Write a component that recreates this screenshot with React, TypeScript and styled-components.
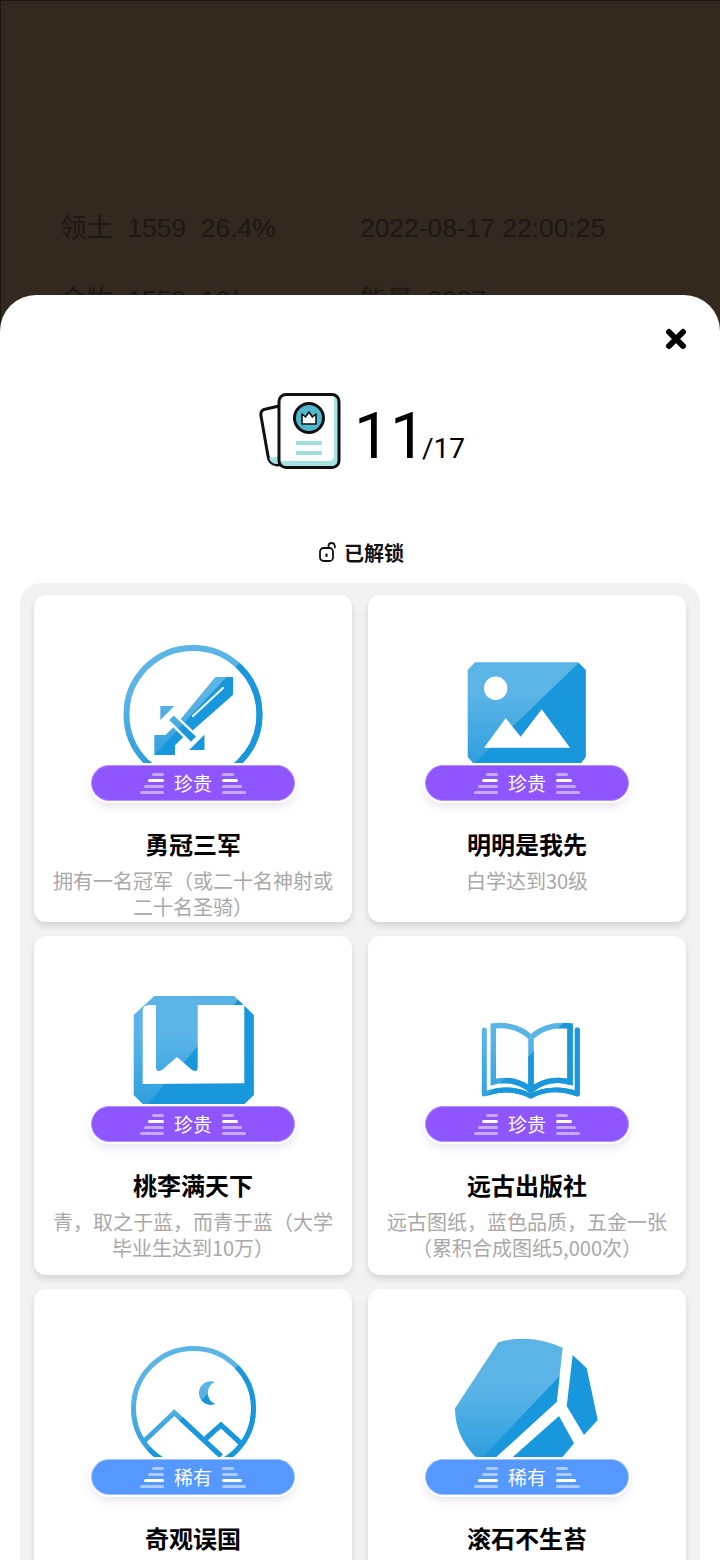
import React from 'react';
import styled, { createGlobalStyle } from 'styled-components';

const LIGHT = '#5ab4e6';
const FADE = '#2f9fde';
const DARK = '#1897dc';

type Line = [number, number, number, number];

// two-tone fill used by all the medals: soft fade with a hard diagonal split on top
function Medal({
  id,
  split,
  render,
  over,
}: {
  id: string;
  split: Line;
  render: (paint: string) => React.ReactNode;
  over?: React.ReactNode;
}) {
  const [x1, y1, x2, y2] = split;
  const dx = x2 - x1;
  const dy = y2 - y1;
  return (
    <MedalSvg viewBox="0 -10 160 128">
      <defs>
        <linearGradient id={`${id}-fade`} gradientUnits="userSpaceOnUse" x1="0" y1="50" x2="0" y2="118">
          <stop offset="0" stopColor={LIGHT} />
          <stop offset="1" stopColor={FADE} />
        </linearGradient>
        <clipPath id={`${id}-clip`}>
          <polygon
            points={`${x1 - dx},${y1 - dy} ${x2 + dx},${y2 + dy} ${x2 + dx + 400},${y2 + dy + 400} ${x1 - dx + 400},${y1 - dy + 400}`}
          />
        </clipPath>
      </defs>
      {render(`url(#${id}-fade)`)}
      <g clipPath={`url(#${id}-clip)`}>{render(DARK)}</g>
      {over}
    </MedalSvg>
  );
}

const SwordMedal = () => (
  <Medal
    id="sword"
    split={[124.7, 20, 41.3, 110]}
    render={(p) => (
      <>
        <circle cx="80" cy="69.5" r="66.5" fill="none" stroke={p} strokeWidth="6" />
        <path fill={p} d="M102.3 32H120V49.7L78 86.7 67 75Z" />
        <polygon fill={p} points="41.3,90 52.3,90 64.7,78.3 73,89 62,100 62,110 41.3,110" />
        <polygon fill={p} points="47.3,61 61.3,61 47.3,75" />
        <polygon fill={p} points="91.3,90 91.3,105 76.3,105" />
        <polygon fill={p} points="60.7,69 84.7,91.7 78,98.3 54.7,75" />
      </>
    )}
    over={
      <>
        <path d="M110 43L80 71" stroke="#fff" strokeWidth="2" strokeLinecap="round" fill="none" />
        <polygon points="60.7,69 84.7,91.7 78,98.3 54.7,75" stroke="#fff" strokeWidth="2.4" fill="none" />
      </>
    }
  />
);

const PictureMedal = () => (
  <Medal
    id="picture"
    split={[131.3, 18.3, 28, 117.7]}
    render={(p) => (
      <polygon fill={p} points="28,17.3 131,17.3 138.7,25 138.7,112 134,118 26,118 20.7,112 20.7,25" />
    )}
    over={
      <>
        <circle cx="48.7" cy="43.3" r="11.7" fill="#fff" />
        <polygon fill="#fff" points="37,102.7 58.7,73.3 73.7,91.7 94.7,64.3 123,102.7" />
      </>
    }
  />
);

const BookmarkMedal = () => (
  <Medal
    id="bookmark"
    split={[124.7, 14, 34.7, 118]}
    render={(p) => (
      <polygon fill={p} points="41.3,10 121.3,10 140.7,29 140.7,109 131.3,118 29.7,118 20.7,109 20.7,29" />
    )}
    over={
      <path
        fill="#fff"
        d="M29.7 25Q29.7 19 36 19H43V81Q43 87 49 84L64 71 79 84Q84.7 87 84.7 81V19H131.3V97.3L29.7 98Z"
      />
    }
  />
);

const OpenBookMedal = () => (
  <Medal
    id="openbook"
    split={[119.7, 34, 46.3, 104]}
    render={(p) => (
      <g fill="none" stroke={p}>
        <path
          strokeWidth="5.5"
          d="M46.3 40C62 38 76 43 84 52C92 43 106 38 123 40V96C108 92 94 96 84 104C74 96 60 92 46.3 96ZM84 52V104"
        />
        <path
          strokeWidth="5"
          strokeLinecap="round"
          strokeLinejoin="round"
          d="M37.3 44V108C54 102 70 103 83.7 110C97 103 114 102 130.3 108V44"
        />
      </g>
    )}
  />
);

const MoonMedal = () => (
  <Medal
    id="moon"
    split={[124.7, 27, 31.3, 114.3]}
    render={(p) => (
      <>
        <circle cx="80.5" cy="69.5" r="60" fill="none" stroke={p} strokeWidth="5" />
        <path d="M31.3 102L61.3 73.7 108 117M93 99.3L108 86 128 104.3" fill="none" stroke={p} strokeWidth="5" />
        <path d="M102 43A11.8 11.8 0 1 0 102 65A12 12 0 0 1 102 43Z" fill={p} />
      </>
    )}
  />
);

const RockMedal = () => (
  <Medal
    id="rock"
    split={[112, 37.7, 36.3, 117.7]}
    render={(p) => <path fill={p} d="M51.3 3.3Q83-6 115.7 8.7L109.7 62.7 48 119H29.7Q8 98 8 69.3Z" />}
    over={
      <>
        <polygon fill={DARK} points="125.7,16 139.7,29.3 150.7,81 137,96 119.7,67" />
        <polygon fill={DARK} points="112,77 127,104.3 114.7,119 64.7,119" />
      </>
    }
  />
);

const CounterIcon = () => (
  <svg width="82" height="78" viewBox="0 0 82 78">
    <path d="M20 14L7 17Q1 18 2 24L9 64Q10 72 18 73L26 72Z" fill="#fff" stroke="#111" strokeWidth="3" strokeLinejoin="round" />
    <path d="M10 66Q12 72 18 72L24 71V64Z" fill="#a9e2e3" />
    <rect x="20" y="2.5" width="60" height="73" rx="7" fill="#fff" />
    <path d="M75 3V64Q75 69 69 69H21V70Q21 75 27 75H74Q80 75 80 69V9Q80 3 75 3Z" fill="#a9e2e3" />
    <rect x="20" y="2.5" width="60" height="73" rx="7" fill="none" stroke="#111" strokeWidth="3" />
    <circle cx="50" cy="26" r="14.5" fill="#4fb8cf" stroke="#111" strokeWidth="3" />
    <path d="M43 32V22L46.5 25 50 20 53.5 25 57 22V32Z" fill="#fff" stroke="#111" strokeWidth="1.6" strokeLinejoin="round" />
    <rect x="37" y="49" width="26" height="4" fill="#9fe0df" />
    <rect x="37" y="59" width="26" height="4" fill="#9fe0df" />
  </svg>
);

const UnlockIcon = () => (
  <svg width="17" height="20" viewBox="0 0 17 20" fill="none" stroke="#111" strokeWidth="1.8">
    <rect x="1" y="6" width="13" height="13" rx="3.5" />
    <path d="M9.5 6V4Q9.5 1 12.5 1T15.8 4V5.5" strokeLinecap="round" />
    <circle cx="7.5" cy="12.5" r="1.1" fill="#111" stroke="none" />
    <path d="M7.5 12.5V15" />
  </svg>
);

const CloseIcon = () => (
  <svg width="22" height="22" viewBox="0 0 22 22" stroke="#000" strokeWidth="6" strokeLinecap="round">
    <path d="M4 4L18 18M18 4L4 18" />
  </svg>
);

const STRIPES = [12, 16, 20, 24];

function Stripes({ side, lit }: { side: 'left' | 'right'; lit: number }) {
  return (
    <StripeStack $side={side}>
      {STRIPES.map((w, i) => (
        <Stripe key={w} $lit={i === lit} style={{ width: w }} />
      ))}
    </StripeStack>
  );
}

const ACHIEVEMENTS = [
  { art: <SwordMedal />, rank: 'epic', title: '勇冠三军', desc: '拥有一名冠军（或二十名神射或二十名圣骑）' },
  { art: <PictureMedal />, rank: 'epic', title: '明明是我先', desc: '白学达到30级' },
  { art: <BookmarkMedal />, rank: 'epic', title: '桃李满天下', desc: '青，取之于蓝，而青于蓝（大学毕业生达到10万）' },
  { art: <OpenBookMedal />, rank: 'epic', title: '远古出版社', desc: '远古图纸，蓝色品质，五金一张（累积合成图纸5,000次）' },
  { art: <MoonMedal />, rank: 'rare', title: '奇观误国', desc: '' },
  { art: <RockMedal />, rank: 'rare', title: '滚石不生苔', desc: '' },
] as const;

export default function App() {
  return (
    <Page>
      <GlobalStyle />
      <StatRow>
        <StatLeft>领土&nbsp;&nbsp;1559&nbsp;&nbsp;26.4%</StatLeft>
        <span>2022-08-17 22:00:25</span>
      </StatRow>
      <StatRow>
        <StatLeft>金牧&nbsp;&nbsp;1559&nbsp;&nbsp;10/</StatLeft>
        <span>能量&nbsp;&nbsp;2007</span>
      </StatRow>
      <Sheet>
        <CloseRow>
          <CloseIcon />
        </CloseRow>
        <Counter>
          <CounterIcon />
          <Count>
            <CountMain>11</CountMain>
            <CountTotal>/17</CountTotal>
          </Count>
        </Counter>
        <SectionLabel>
          <UnlockIcon />
          已解锁
        </SectionLabel>
        <Panel>
          {ACHIEVEMENTS.map((a) => (
            <Card key={a.title}>
              {a.art}
              <Badge $rank={a.rank}>
                <Stripes side="left" lit={a.rank === 'epic' ? 1 : 2} />
                <BadgeText>{a.rank === 'epic' ? '珍贵' : '稀有'}</BadgeText>
                <Stripes side="right" lit={a.rank === 'epic' ? 1 : 2} />
              </Badge>
              <CardTitle>{a.title}</CardTitle>
              {a.desc && <CardDesc>{a.desc}</CardDesc>}
            </Card>
          ))}
        </Panel>
      </Sheet>
    </Page>
  );
}

const GlobalStyle = createGlobalStyle`
  html, body {
    margin: 0;
    padding: 0;
    background: #33291f;
  }
  * {
    box-sizing: border-box;
  }
`;

const Page = styled.div`
  position: relative;
  width: 720px;
  height: 1560px;
  overflow: hidden;
  padding-top: 208px;
  background: #33291f;
  box-shadow: inset 1px 1px 0 #1c1712;
  font-family: "Liberation Sans", "Noto Sans CJK SC", sans-serif;
`;

const StatRow = styled.div`
  display: flex;
  height: 72px;
  padding-left: 60px;
  align-items: flex-start;
  font-size: 26.4px;
  line-height: 40px;
  color: #1c1814;
`;

const StatLeft = styled.span`
  width: 300px;
`;

const Sheet = styled.div`
  position: absolute;
  left: 0;
  top: 295px;
  width: 720px;
  height: 1265px;
  padding: 33px 20px 0;
  overflow: hidden;
  background: #fff;
  border-radius: 36px 36px 0 0;
`;

const CloseRow = styled.div`
  display: flex;
  justify-content: flex-end;
  padding-right: 13px;
  height: 22px;
`;

const Counter = styled.div`
  display: flex;
  justify-content: center;
  align-items: center;
  gap: 13px;
  height: 78px;
  margin-top: 42px;
  padding-left: 4px;
  color: #000;
`;

const Count = styled.div`
  display: flex;
  align-items: baseline;
  padding-top: 11px;
`;

const CountMain = styled.span`
  font-family: Roboto, sans-serif;
  font-size: 64px;
  line-height: 78px;
`;

const CountTotal = styled.span`
  margin-left: -4px;
  font-family: Roboto, sans-serif;
  font-size: 28px;
`;

const SectionLabel = styled.div`
  display: flex;
  justify-content: center;
  align-items: center;
  gap: 8px;
  height: 30px;
  margin-top: 67px;
  padding-left: 3px;
  font-family: "Noto Sans CJK SC", sans-serif;
  font-size: 20px;
  font-weight: 700;
  color: #111;
`;

const Panel = styled.div`
  display: grid;
  grid-template-columns: 318px 318px;
  grid-template-rows: 327px 339px 340px;
  gap: 14px 16px;
  margin-top: 16px;
  padding: 12px 14px;
  background: #f2f2f2;
  border-radius: 20px;
`;

const Card = styled.div`
  display: flex;
  flex-direction: column;
  align-items: center;
  padding: 40px 19px 0;
  background: #fff;
  border-radius: 12px;
  box-shadow: 0 4px 6px rgba(0, 0, 0, 0.12);
`;

const MedalSvg = styled.svg`
  display: block;
  flex: none;
  width: 160px;
  height: 128px;
`;

const Badge = styled.div<{ $rank: 'epic' | 'rare' }>`
  display: flex;
  flex: none;
  align-items: center;
  justify-content: center;
  gap: 10px;
  width: 204px;
  height: 36px;
  margin-top: 2px;
  border: 1px solid ${(p) => (p.$rank === 'epic' ? '#b592ff' : '#9fc3ff')};
  border-radius: 18px;
  background: ${(p) => (p.$rank === 'epic' ? '#8f55ff' : '#5598ff')};
  box-shadow: 0 0 0 2px #fff, 0 5px 10px rgba(60, 40, 140, 0.14);
`;

const BadgeText = styled.span`
  font-family: "Noto Sans CJK SC", sans-serif;
  font-size: 19px;
  line-height: 24px;
  color: #fff;
`;

const StripeStack = styled.div<{ $side: 'left' | 'right' }>`
  display: flex;
  flex-direction: column;
  gap: 3px;
  width: 24px;
  height: 22px;
  padding-top: 1px;
  align-items: ${(p) => (p.$side === 'left' ? 'flex-end' : 'flex-start')};
`;

const Stripe = styled.i<{ $lit: boolean }>`
  display: block;
  flex: none;
  height: 3px;
  border-radius: 2px;
  background: ${(p) => (p.$lit ? '#fff' : 'rgba(255, 255, 255, 0.5)')};
`;

const CardTitle = styled.div`
  flex: none;
  margin-top: 27px;
  font-family: "Noto Sans CJK SC", sans-serif;
  font-size: 24px;
  font-weight: 700;
  line-height: 32px;
  color: #000;
`;

const CardDesc = styled.div`
  width: 280px;
  margin-top: 8px;
  font-family: "Noto Sans CJK SC", sans-serif;
  font-size: 20px;
  line-height: 26px;
  text-align: center;
  color: #a8a8a8;
`;
